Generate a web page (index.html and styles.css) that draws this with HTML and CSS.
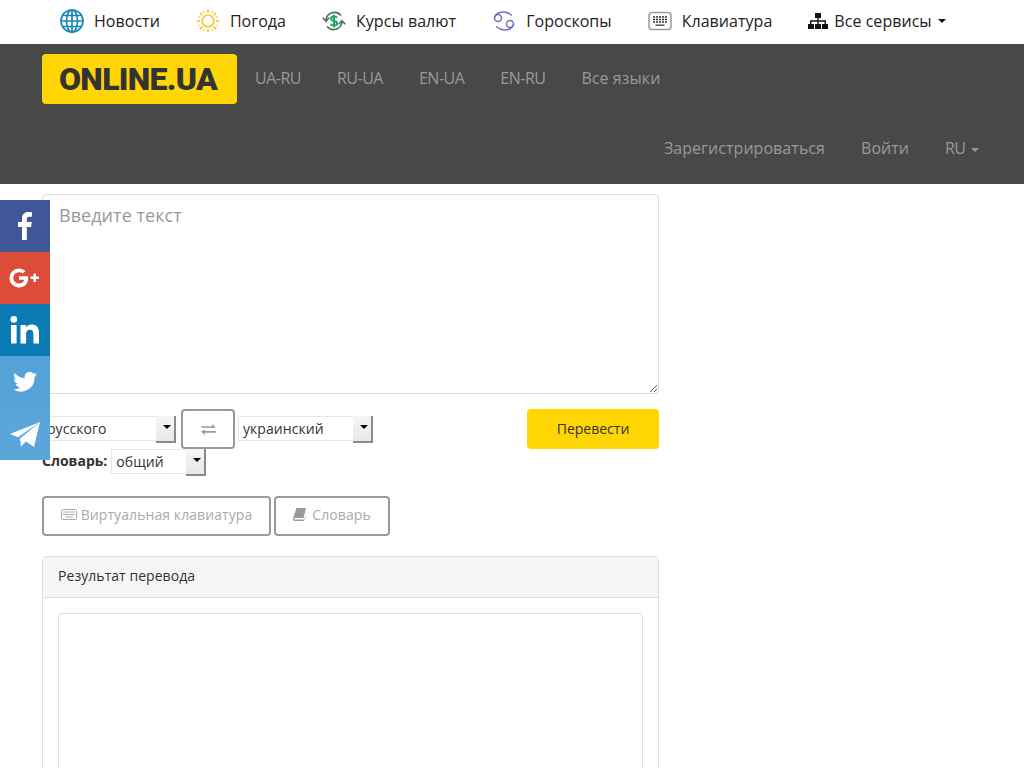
FILE: index.html
```html
<!DOCTYPE html>
<html lang="ru">
<head>
    <meta charset="UTF-8">
    <meta name="viewport" content="width=device-width, initial-scale=1.0">
    <title>Online.ua - Переводчик</title>
    <link rel="stylesheet" href="styles.css">
</head>
<body>

    <!-- Верхняя полоса сервисов -->
    <div class="top-bar">
        <div class="container top-links">
            <a class="top-link" href="#">
                <svg class="top-icon" viewBox="0 0 24 24" fill="none" stroke="#1b87b8" stroke-width="1.7">
                    <circle cx="12" cy="12" r="11"/>
                    <ellipse cx="12" cy="12" rx="5.5" ry="11"/>
                    <path d="M12 1v22M1 12h22M2.600 6.500h18.800M2.600 17.500h18.800"/>
                </svg>
                Новости
            </a>
            <a class="top-link" href="#">
                <svg class="top-icon" viewBox="0 0 24 24" fill="none" stroke="#fcc834" stroke-width="1.700">
                    <circle cx="12" cy="12" r="5.800"/>
                    <path d="M12 .5v3.500M12 20v3.500M.5 12H4M20 12h3.500M3.800 3.800l2.500 2.500M17.700 17.700l2.500 2.500M3.800 20.200l2.500-2.500M17.700 6.300l2.500-2.500"/>
                    <path d="M7.300 2l1 2.300M15.700 19.700l1 2.300M2 7.300l2.300 1M19.700 15.700l2.300 1M16.700 2l-1 2.300M8.300 19.700l-1 2.300M22 7.300l-2.300 1M4.300 15.700l-2.300 1" stroke-width="1"/>
                </svg>
                Погода
            </a>
            <a class="top-link" href="#">
                <svg class="top-icon" viewBox="0 0 24 24" fill="none" stroke="#4c6f63" stroke-width="1.600">
                    <path d="M4 11A8.500 8.500 0 0 1 19 6.500"/>
                    <path d="M20 13A8.500 8.500 0 0 1 5 17.500"/>
                    <path d="M.8 8.800 4 12.300l3.200-3.500M16.800 15.200l3.200-3.500 3.200 3.500"/>
                    <path d="M15.200 8.800c-.6-.9-1.800-1.300-3.200-1.300-1.700 0-3 .8-3 2.200 0 3 6.200 1.600 6.200 4.600 0 1.400-1.400 2.200-3.200 2.200-1.500 0-2.700-.4-3.400-1.300M12 5.600v12.800" stroke="#1fa567" stroke-width="2"/>
                </svg>
                Курсы валют
            </a>
            <a class="top-link" href="#">
                <svg class="top-icon" viewBox="0 0 24 24" fill="none" stroke="#7d70b8" stroke-width="1.500">
                    <circle cx="6" cy="9" r="3.500"/>
                    <circle cx="18" cy="15" r="3.500"/>
                    <path d="M2.500 9C3 4.500 8 2.800 12 3c3 .2 5.500 1.300 8 3.500"/>
                    <path d="M21.500 15c-.5 4.500-5.500 6.200-9.500 6-3-.2-5.500-1.300-8-3.500"/>
                </svg>
                Гороскопы
            </a>
            <a class="top-link" href="#">
                <svg class="top-icon" viewBox="0 0 24 24" fill="none">
                    <rect x="1" y="3.500" width="22" height="17" rx="3" stroke="#9a9a9a" stroke-width="1.500"/>
                    <path d="M5 8h14M5 10.500h14M5 13h14" stroke="#333" stroke-width="1.500" stroke-dasharray="2 1"/>
                    <path d="M7.500 16.200h9" stroke="#333" stroke-width="1.300"/>
                </svg>
                Клавиатура
            </a>
            <a class="top-link all-services" href="#">
                <svg class="sitemap-icon" viewBox="0 0 20 18" fill="#111">
                    <rect x="7" y="1" width="6" height="5"/>
                    <rect x="0" y="12" width="6" height="5"/>
                    <rect x="7" y="12" width="6" height="5"/>
                    <rect x="14" y="12" width="6" height="5"/>
                    <path d="M9.300 6h1.400v2.300H18V12h-1.400V9.700h-5.900V12H9.300V9.700H3.400V12H2V8.300h7.300z"/>
                </svg>
                Все сервисы <span class="caret"></span>
            </a>
        </div>
    </div>

    <!-- Шапка -->
    <header class="site-header">
        <div class="container">
            <div class="header-row">
                <a class="logo" href="#"><span class="logo-text">ONLINE.UA</span></a>
                <nav class="lang-nav">
                    <a class="lang-code" href="#">UA-RU</a>
                    <a class="lang-code" href="#">RU-UA</a>
                    <a class="lang-code" href="#">EN-UA</a>
                    <a class="lang-code" href="#">EN-RU</a>
                    <a href="#">Все языки</a>
                </nav>
            </div>
            <nav class="user-nav">
                <a href="#">Зарегистрироваться</a>
                <a href="#">Войти</a>
                <a class="lang-code" href="#">RU <span class="caret"></span></a>
            </nav>
        </div>
    </header>

    <!-- Кнопки соцсетей -->
    <div class="social">
        <a class="social-item fb" href="#">
            <svg viewBox="0 0 24 30" width="24" height="30" fill="#fff"><path d="M9 29V16H5v-5h4V7.500C9 3.500 11.400 1 15.200 1c1.800 0 3.200.1 3.800.2v4.600h-2.700c-2 0-2.500 1-2.500 2.500V11h5l-.7 5H13.800v13z"/></svg>
        </a>
        <a class="social-item gp" href="#">
            <svg viewBox="0 0 32 20" width="32" height="20" fill="#fff"><path d="M10 8.200v3.500h5.200c-.4 2.200-2.300 3.900-5.200 3.900a5.700 5.700 0 0 1 0-11.400c1.500 0 2.800.5 3.800 1.400l2.700-2.700A9.500 9.500 0 0 0 10 .4a9.600 9.600 0 0 0 0 19.200c5.500 0 9.200-3.900 9.200-9.300 0-.7-.1-1.400-.2-2.100z"/><path d="M27 8.500V5.500h-2.500v3h-3V11h3v3H27v-3h3V8.500z"/></svg>
        </a>
        <a class="social-item in" href="#">
            <svg viewBox="0 0 30 30" width="30" height="30" fill="#fff"><circle cx="3.800" cy="4.400" r="3.300"/><rect x="1" y="10" width="5.600" height="18.500"/><path d="M10.500 10h5.400v2.600c.9-1.600 2.900-3 5.700-3 5.700 0 7.400 3.600 7.400 9v9.900h-5.600v-8.800c0-2.600-.5-5-3.400-5-3 0-3.900 2.100-3.900 5v8.800h-5.600z"/></svg>
        </a>
        <a class="social-item tw" href="#">
            <svg viewBox="0 0 24 20" width="24" height="20" fill="#fff"><path d="M24 2.400c-.9.400-1.800.7-2.800.8 1-.6 1.800-1.600 2.200-2.700-1 .6-2 1-3.100 1.200A4.900 4.900 0 0 0 11.800 6.200C7.700 6 4.100 4 1.700.9a4.900 4.900 0 0 0 1.500 6.600c-.8 0-1.600-.2-2.200-.6 0 2.400 1.700 4.400 3.900 4.900-.7.200-1.500.2-2.200.1.600 2 2.400 3.400 4.600 3.400A9.900 9.900 0 0 1 0 17.300 13.900 13.900 0 0 0 21.500 5c1-.7 1.800-1.600 2.500-2.600z"/></svg>
        </a>
        <a class="social-item tg" href="#">
            <svg viewBox="0 0 30 25" width="30" height="25" fill="#fff"><path d="M30 0 0 12l8 3.300zM10 16.500 30 0l-6 25-8-5.500-5 5z" fill-rule="evenodd"/></svg>
        </a>
    </div>

    <!-- Форма перевода -->
    <main class="container translator">
        <textarea class="source-text" placeholder="Введите текст"></textarea>

        <div class="lang-row">
            <div class="select-box from-select">
                <select><option>русского</option></select>
            </div>
            <button class="swap-btn">
                <svg viewBox="0 0 16 12" width="15" height="11" fill="#999"><path d="M0 2.500h12V0l4 3.500-4 1.500v-1H0zM16 7.500H4V6L0 8.500 4 12V9.500h12z"/></svg>
            </button>
            <div class="select-box to-select">
                <select><option>украинский</option></select>
            </div>
            <button class="translate-btn">Перевести</button>
        </div>

        <div class="dict-row">
            <label class="dict-label">Словарь:</label>
            <div class="select-box dict-select">
                <select><option>общий</option></select>
            </div>
        </div>

        <div class="tool-row">
            <button class="tool-btn keyboard-btn">
                <svg viewBox="0 0 16 11" width="16" height="11" fill="none" stroke="#aaa"><rect x=".5" y=".5" width="15" height="10" rx="1"/><path d="M2 3h12M2 5.500h12M4 8h8"/></svg>
                Виртуальная клавиатура
            </button>
            <button class="tool-btn dict-btn">
                <svg viewBox="0 0 13 13" width="13" height="13" fill="#999"><path d="M3.500 0H13l-2.500 10H2c-.8 0-1 1.500 0 1.500h9.500l1-4V10L11 13H2C.4 13-.4 11.500.2 10z"/></svg>
                Словарь
            </button>
        </div>

        <section class="result-panel">
            <div class="panel-heading">Результат перевода</div>
            <div class="panel-body">
                <div class="result-box"></div>
            </div>
        </section>
    </main>

</body>
</html>
```

FILE: styles.css
```css
* {
    box-sizing: border-box;
}

html, body {
    height: 100vh;
    overflow: hidden;
}

body {
    margin: 0;
    font-family: "Open Sans", sans-serif;
    font-size: 14px;
    line-height: 20px;
    color: #333;
    background-color: #fff;
}

a {
    text-decoration: none;
}

.container {
    width: 940px;
    margin: 0 auto;
}

.caret {
    display: inline-block;
    width: 0;
    height: 0;
    margin-left: 2px;
    vertical-align: middle;
    border-top: 4px solid;
    border-left: 4px solid transparent;
    border-right: 4px solid transparent;
}

/* Верхняя полоса */
.top-bar {
    height: 44px;
    background-color: #fff;
}

.top-links {
    display: flex;
    align-items: center;
    gap: 36px;
    height: 42px;
    padding-left: 18px;
}

.top-link {
    display: flex;
    align-items: center;
    gap: 10px;
    font-size: 16px;
    letter-spacing: 0.04px;
    color: #222;
    white-space: nowrap;
}

.top-icon {
    width: 24px;
    height: 24px;
}

.sitemap-icon {
    width: 20px;
    height: 18px;
    margin-right: -4px;
}

.all-services .caret {
    margin-left: -4px;
    color: #111;
}

/* Шапка */
.site-header {
    height: 140px;
    background-color: #484848;
}

.header-row {
    display: flex;
    align-items: flex-start;
    height: 70px;
    padding-top: 10px;
}

.logo {
    display: flex;
    align-items: center;
    justify-content: center;
    width: 195px;
    height: 50px;
    padding-right: 3px;
    background-color: #ffd503;
    border-radius: 4px;
}

.logo-text {
    font-family: Roboto, sans-serif;
    font-size: 32px;
    font-weight: 900;
    letter-spacing: -0.7px;
    color: #333;
}

.lang-nav {
    display: flex;
    align-items: center;
    gap: 36px;
    height: 48px;
    padding-left: 18px;
}

.lang-nav a,
.user-nav a {
    font-size: 16px;
    letter-spacing: 0.05px;
    color: #999;
}

.lang-nav .lang-code {
    letter-spacing: -0.5px;
}

.user-nav .lang-code {
    letter-spacing: -0.6px;
}

.user-nav {
    display: flex;
    justify-content: flex-end;
    align-items: center;
    gap: 36px;
    height: 68px;
    margin-right: 3px;
}

/* Соцсети */
.social {
    position: fixed;
    z-index: 10;
    top: 200px;
    left: 0;
    width: 50px;
}

.social-item {
    display: flex;
    align-items: center;
    justify-content: center;
    height: 52px;
}

.fb { background-color: #3f5698; }
.gp { background-color: #dd4b39; }
.in { background-color: #0a7ab5; }
.tw { background-color: #55a3d9; }
.tg { background-color: #5ba4dc; }

/* Форма */
.translator {
    padding-top: 10px;
}

.source-text {
    display: block;
    width: 617px;
    height: 200px;
    padding: 6px 16px;
    font-family: "Open Sans", sans-serif;
    font-size: 18px;
    line-height: 28px;
    letter-spacing: 0.05px;
    border: 1px solid #ddd;
    border-radius: 4px;
}

.source-text::placeholder {
    color: #999;
    opacity: 1;
}

.lang-row {
    display: flex;
    align-items: flex-start;
    width: 617px;
    margin-top: 15px;
    height: 40px;
}

.lang-row .select-box {
    margin-top: 7px;
}

.select-box {
    position: relative;
    height: 25px;
    border: 1px solid #e6e6e6;
    background-color: #fff;
}

/* Кнопка-стрелка селекта */
.select-box::after {
    content: "";
    position: absolute;
    top: -1px;
    right: -1px;
    width: 18px;
    height: 25px;
    background: linear-gradient(#f6f6f6, #e8e8e8);
    border-right: 2px solid #8a8a8a;
    border-bottom: 2px solid #8a8a8a;
    pointer-events: none;
}

.select-box::before {
    content: "";
    position: absolute;
    z-index: 1;
    top: 8px;
    right: 4px;
    border-top: 4px solid #000;
    border-left: 4px solid transparent;
    border-right: 4px solid transparent;
    pointer-events: none;
}

.select-box select {
    display: block;
    width: 100%;
    height: 23px;
    padding: 0 4px;
    border: 0;
    appearance: none;
    background: transparent;
    font-family: "Open Sans", sans-serif;
    font-size: 14px;
    line-height: 21px;
    letter-spacing: 0.05px;
    color: #333;
}

.from-select { width: 134px; }
.to-select { width: 135px; margin-left: 3px; }
.dict-select { width: 95px; margin-left: 4px; }

.swap-btn {
    display: flex;
    align-items: center;
    justify-content: center;
    width: 54px;
    height: 40px;
    margin-left: 5px;
    padding: 0;
    background-color: #fff;
    border: 2px solid #999;
    border-radius: 4px;
}

.translate-btn {
    width: 132px;
    height: 40px;
    margin-left: auto;
    padding: 0 0 2px;
    font-family: "Open Sans", sans-serif;
    font-size: 14px;
    color: #333;
    background-color: #ffd503;
    border: 0;
    border-radius: 4px;
}

.dict-row {
    display: flex;
    align-items: center;
    height: 25px;
}

.dict-label {
    padding-bottom: 2px;
    font-weight: 700;
}

.tool-row {
    display: flex;
    gap: 3px;
    margin-top: 22px;
}

.tool-btn {
    display: flex;
    align-items: center;
    justify-content: center;
    gap: 4px;
    height: 40px;
    padding: 0 0 4px;
    font-family: "Open Sans", sans-serif;
    font-size: 14px;
    letter-spacing: 0.08px;
    color: #aaa;
    background-color: #fff;
    border: 2px solid #999;
    border-radius: 4px;
}

.keyboard-btn { width: 229px; }
.dict-btn { width: 116px; gap: 6px; }

.result-panel {
    width: 617px;
    margin-top: 20px;
    border: 1px solid #ddd;
    border-radius: 4px;
}

.panel-heading {
    height: 41px;
    padding: 9px 15px;
    letter-spacing: 0.05px;
    background-color: #f5f5f5;
    border-bottom: 1px solid #ddd;
}

.panel-body {
    padding: 15px;
}

.result-box {
    height: 200px;
    border: 1px solid #ddd;
    border-radius: 4px;
}
```
